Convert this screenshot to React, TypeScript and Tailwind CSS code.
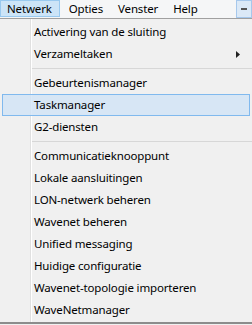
const menuBar = [
  { label: 'Netwerk', cls: 'pl-[6px] pr-[7px] bg-[#cce4f7] border-[#99c9ef]' },
  { label: 'Opties', cls: 'pl-[8px] pr-[6px] border-transparent' },
  { label: 'Venster', cls: 'pl-[7px] pr-[6px] border-transparent' },
  { label: 'Help', cls: 'pl-[7px] pr-[4px] border-transparent' },
];

type Entry = { label: string; sub?: boolean; active?: boolean } | 'sep';

const entries: Entry[] = [
  { label: 'Activering van de sluiting' },
  { label: 'Verzameltaken', sub: true },
  'sep',
  { label: 'Gebeurtenismanager' },
  { label: 'Taskmanager', active: true },
  { label: 'G2-diensten' },
  'sep',
  { label: 'Communicatieknooppunt' },
  { label: 'Lokale aansluitingen' },
  { label: 'LON-netwerk beheren' },
  { label: 'Wavenet beheren' },
  { label: 'Unified messaging' },
  { label: 'Huidige configuratie' },
  { label: 'Wavenet-topologie importeren' },
  { label: 'WaveNetmanager' },
];

export default function App() {
  return (
    <div
      className="w-[252px] h-[325px] bg-[#f0f0f0] text-[11.5px] tracking-[-0.15px] text-black overflow-hidden"
      style={{ fontFamily: "'Noto Sans', 'Open Sans', sans-serif" }}
    >
      {/* menu bar */}
      <div className="h-[19px] flex items-start bg-[#f5f6f7] border-b border-[#a0a0a0]">
        {menuBar.map((m) => (
          <div key={m.label} className={'h-[17px] flex items-center leading-none border ' + m.cls}>
            {m.label}
          </div>
        ))}
        <div className="ml-auto h-[18px] w-[16px] bg-[#dbe9f7] border border-[#a6c8ec] flex items-center justify-center">
          <div className="w-[6px] h-[2px] bg-[#555]" />
        </div>
      </div>

      {/* dropdown */}
      <div className="relative h-[305px] pt-[2px] border-b-2 border-[#8c8c8c]">
        <div className="absolute left-[30px] top-0 bottom-0 w-px bg-[#e0e0e0]" />
        <div className="absolute left-[31px] top-0 bottom-0 w-px bg-white" />
        {entries.map((e, i) =>
          e === 'sep' ? (
            <div key={i} className="h-[7px] flex items-center pl-[31px]">
              <div className="h-px w-full bg-[#d7d7d7]" />
            </div>
          ) : (
            <div
              key={i}
              className={
                e.active
                  ? 'relative h-[22px] mx-[2px] pl-[31px] flex items-center bg-[#d1e3f6]/80 border border-[#80b9ee]'
                  : 'relative h-[22px] mx-[2px] pl-[31px] flex items-center border border-transparent'
              }
            >
              <span className="leading-none">{e.label}</span>
              {e.sub && (
                <svg className="absolute right-[9px] top-[7px]" width="4" height="7" viewBox="0 0 4 7">
                  <path d="M0 0 L4 3.5 L0 7 Z" fill="#222" />
                </svg>
              )}
            </div>
          ),
        )}
      </div>
    </div>
  );
}
